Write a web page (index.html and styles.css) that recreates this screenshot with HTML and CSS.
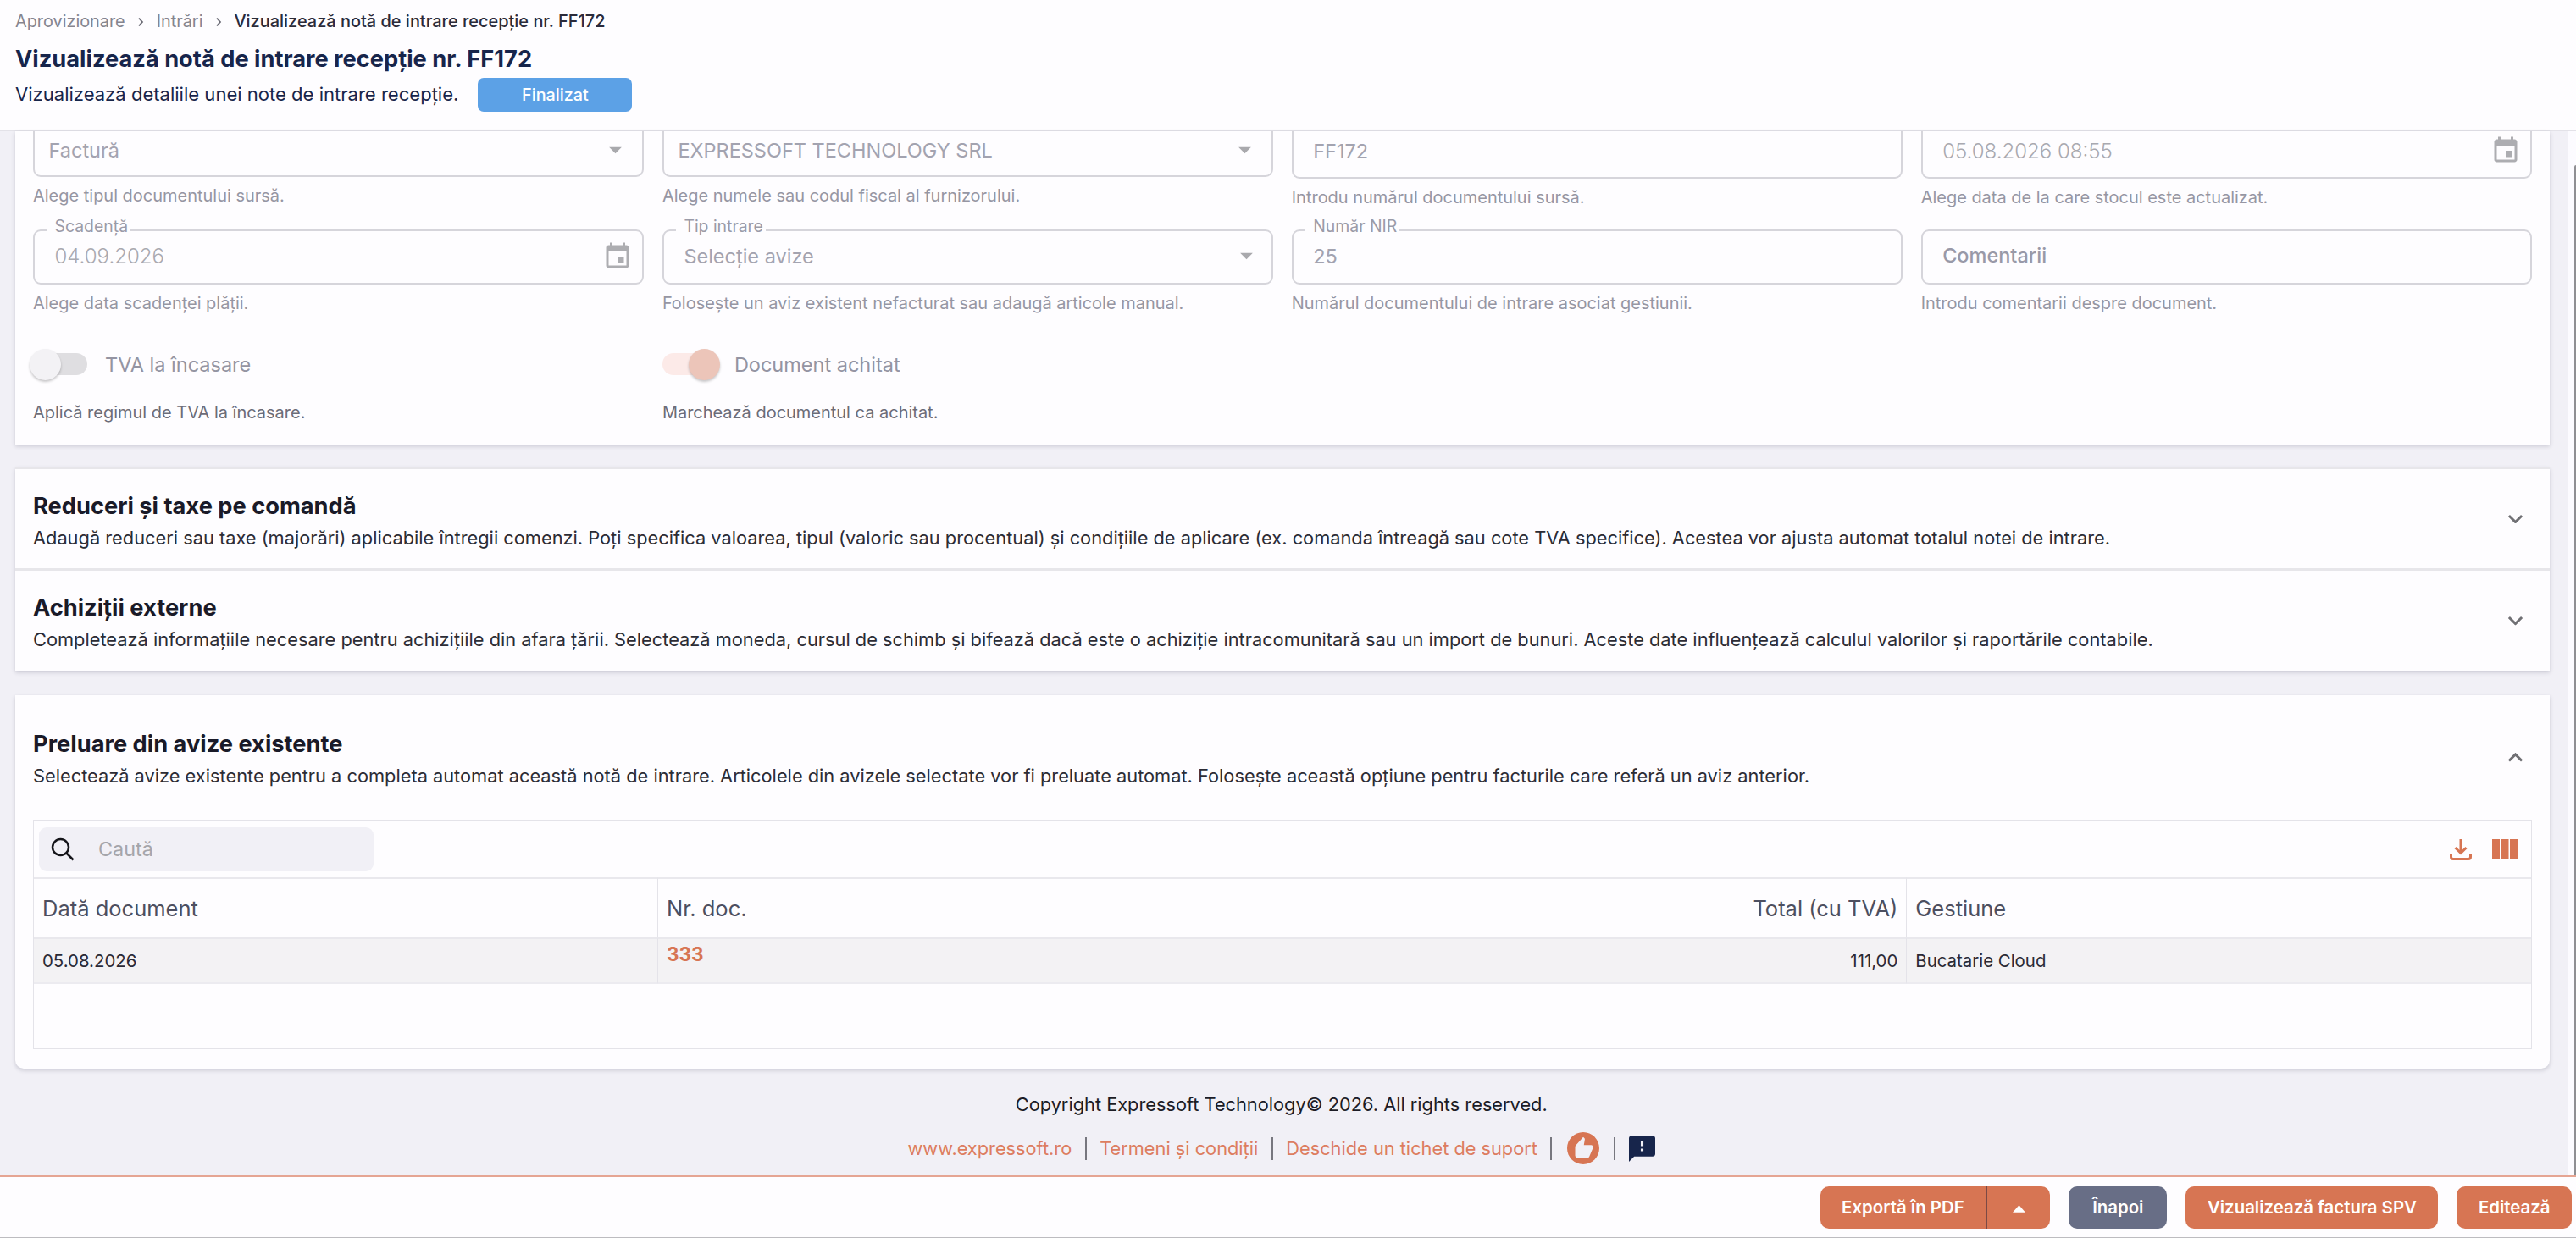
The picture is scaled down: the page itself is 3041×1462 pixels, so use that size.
FILE: index.html
```html
<!DOCTYPE html>
<html lang="ro">
<head>
    <meta charset="UTF-8">
    <meta name="viewport" content="width=device-width, initial-scale=1.0">
    <title>Vizualizează notă de intrare recepție nr. FF172</title>
    <link rel="stylesheet" href="styles.css">
</head>
<body>
<!-- Shared icons -->
<svg class="icon-defs" xmlns="http://www.w3.org/2000/svg">
    <symbol id="icon-calendar" viewBox="0 0 24 24">
        <path d="M17 12h-5v5h5v-5zM16 1v2H8V1H6v2H5c-1.11 0-1.99.9-1.99 2L3 19c0 1.1.89 2 2 2h14c1.1 0 2-.9 2-2V5c0-1.1-.9-2-2-2h-1V1h-2zm3 18H5V8h14v11z"/>
    </symbol>
    <symbol id="icon-arrow" viewBox="0 0 24 24">
        <path d="M7.2 9.5h9.6L12 14.5z"/>
    </symbol>
    <symbol id="icon-chevron" viewBox="0 0 20 12">
        <path d="M2 2l8 8 8-8" fill="none" stroke="currentColor" stroke-width="3.2"/>
    </symbol>
</svg>

<header class="page-header">
    <nav class="breadcrumbs">
        <a>Aprovizionare</a>
        <svg class="crumb-sep" viewBox="0 0 8 12"><path d="M2 1.5L6 6l-4 4.5"/></svg>
        <a>Intrări</a>
        <svg class="crumb-sep" viewBox="0 0 8 12"><path d="M2 1.5L6 6l-4 4.5"/></svg>
        <span class="current">Vizualizează notă de intrare recepție nr. FF172</span>
    </nav>
    <h1>Vizualizează notă de intrare recepție nr. FF172</h1>
    <div class="subtitle">
        <span>Vizualizează detaliile unei note de intrare recepție.</span>
        <span class="badge">Finalizat</span>
    </div>
</header>

<div class="scroll-area">
    <main class="content">
        <!-- Document details -->
        <section class="card details">
            <div class="form-group">
                <div class="field cut select">
                    <span class="value">Factură</span>
                    <svg class="arrow"><use href="#icon-arrow"/></svg>
                </div>
                <p class="helper">Alege tipul documentului sursă.</p>
            </div>
            <div class="form-group">
                <div class="field cut select">
                    <span class="value">EXPRESSOFT TECHNOLOGY SRL</span>
                    <svg class="arrow"><use href="#icon-arrow"/></svg>
                </div>
                <p class="helper">Alege numele sau codul fiscal al furnizorului.</p>
            </div>
            <div class="form-group">
                <div class="field cut">
                    <span class="value">FF172</span>
                </div>
                <p class="helper">Introdu numărul documentului sursă.</p>
            </div>
            <div class="form-group">
                <div class="field cut">
                    <span class="value date">05.08.2026 08:55</span>
                    <svg class="calendar"><use href="#icon-calendar"/></svg>
                </div>
                <p class="helper">Alege data de la care stocul este actualizat.</p>
            </div>

            <div class="form-group">
                <div class="field">
                    <label>Scadență</label>
                    <span class="value date">04.09.2026</span>
                    <svg class="calendar"><use href="#icon-calendar"/></svg>
                </div>
                <p class="helper">Alege data scadenței plății.</p>
            </div>
            <div class="form-group">
                <div class="field">
                    <label>Tip intrare</label>
                    <span class="value">Selecție avize</span>
                    <svg class="arrow"><use href="#icon-arrow"/></svg>
                </div>
                <p class="helper">Folosește un aviz existent nefacturat sau adaugă articole manual.</p>
            </div>
            <div class="form-group">
                <div class="field">
                    <label>Număr NIR</label>
                    <span class="value">25</span>
                </div>
                <p class="helper">Numărul documentului de intrare asociat gestiunii.</p>
            </div>
            <div class="form-group">
                <div class="field">
                    <span class="value placeholder">Comentarii</span>
                </div>
                <p class="helper">Introdu comentarii despre document.</p>
            </div>

            <div class="form-group">
                <div class="switch-row">
                    <span class="switch"><span class="thumb"></span></span>
                    <span>TVA la încasare</span>
                </div>
                <p class="helper dark">Aplică regimul de TVA la încasare.</p>
            </div>
            <div class="form-group">
                <div class="switch-row">
                    <span class="switch on"><span class="thumb"></span></span>
                    <span>Document achitat</span>
                </div>
                <p class="helper dark">Marchează documentul ca achitat.</p>
            </div>
        </section>

        <!-- Collapsed panels -->
        <section class="card panels">
            <div class="panel">
                <div>
                    <h2>Reduceri și taxe pe comandă</h2>
                    <p>Adaugă reduceri sau taxe (majorări) aplicabile întregii comenzi. Poți specifica valoarea, tipul (valoric sau procentual) și condițiile de aplicare (ex. comanda întreagă sau cote TVA specifice). Acestea vor ajusta automat totalul notei de intrare.</p>
                </div>
                <svg class="chevron"><use href="#icon-chevron"/></svg>
            </div>
            <div class="panel">
                <div>
                    <h2>Achiziții externe</h2>
                    <p>Completează informațiile necesare pentru achizițiile din afara țării. Selectează moneda, cursul de schimb și bifează dacă este o achiziție intracomunitară sau un import de bunuri. Aceste date influențează calculul valorilor și raportările contabile.</p>
                </div>
                <svg class="chevron"><use href="#icon-chevron"/></svg>
            </div>
        </section>

        <!-- Delivery notes -->
        <section class="card notes">
            <div class="panel">
                <div>
                    <h2>Preluare din avize existente</h2>
                    <p>Selectează avize existente pentru a completa automat această notă de intrare. Articolele din avizele selectate vor fi preluate automat. Folosește această opțiune pentru facturile care referă un aviz anterior.</p>
                </div>
                <svg class="chevron up"><use href="#icon-chevron"/></svg>
            </div>
            <div class="grid">
                <div class="toolbar">
                    <div class="search">
                        <svg viewBox="0 0 28 28"><circle cx="11.5" cy="11.5" r="9.5"/><path d="M18.5 18.5L26.5 26.5"/></svg>
                        <span>Caută</span>
                    </div>
                    <div class="tools">
                        <svg class="download" viewBox="0 0 26 26"><path d="M13 1v16M6.5 11l6.5 6.5 6.5-6.5M1.5 18v4q0 2.5 2.5 2.5h18q2.5 0 2.5-2.5v-4"/></svg>
                        <svg class="columns" viewBox="0 0 30 23"><path d="M0 0h9v23H0zM10.5 0h9v23h-9zM21 0h9v23h-9z"/></svg>
                    </div>
                </div>
                <table>
                    <thead>
                        <tr>
                            <th>Dată document</th>
                            <th>Nr. doc.</th>
                            <th class="right">Total (cu TVA)</th>
                            <th>Gestiune</th>
                        </tr>
                    </thead>
                    <tbody>
                        <tr>
                            <td>05.08.2026</td>
                            <td class="doc"><a>333</a></td>
                            <td class="right">111,00</td>
                            <td>Bucatarie Cloud</td>
                        </tr>
                    </tbody>
                </table>
            </div>
        </section>

        <footer class="copyright">
            <p>Copyright Expressoft Technology© 2026. All rights reserved.</p>
            <div class="links">
                <a>www.expressoft.ro</a>
                <i></i>
                <a>Termeni și condiții</a>
                <i></i>
                <a>Deschide un tichet de suport</a>
                <i></i>
                <svg class="like" viewBox="2 2 20 20"><path d="M12 2C6.48 2 2 6.48 2 12s4.48 10 10 10 10-4.48 10-10S17.52 2 12 2zm6 9.8c0 .12-.02.24-.07.35l-2.12 4.96c-.23.54-.76.89-1.34.89H8.5C7.67 18 7 17.33 7 16.5v-5.25c0-.39.16-.77.43-1.05L12 5l.69.69c.18.19.29.44.29.7v.2L12.41 10H17c.55 0 1 .45 1 1v.8z"/></svg>
                <i></i>
                <svg class="feedback" viewBox="2 2 20 20"><path d="M20 2H4c-1.1 0-1.99.9-1.99 2L2 22l4-4h14c1.1 0 2-.9 2-2V4c0-1.1-.9-2-2-2zm-7 12h-2v-2h2v2zm0-4h-2V6h2v4z"/></svg>
            </div>
        </footer>
    </main>
    <div class="scrollbar"><div class="scroll-thumb"></div></div>
</div>

<div class="actions">
    <div class="split">
        <button>Exportă în PDF</button>
        <button class="toggle"><svg viewBox="0 0 16 9"><path d="M8 0l8 9H0z"/></svg></button>
    </div>
    <button class="secondary">Înapoi</button>
    <button>Vizualizează factura SPV</button>
    <button>Editează</button>
</div>
</body>
</html>
```
FILE: styles.css
```css
* {
    box-sizing: border-box;
}
body {
    margin: 0;
    height: 1462px;
    display: flex;
    flex-direction: column;
    overflow: hidden;
    background-color: #f1f0f6;
    font-family: Inter, "Liberation Sans", sans-serif;
    font-size: 21.8px;
    color: #1c1c26;
}
h1, h2, p {
    margin: 0;
}
svg {
    flex: none;
    fill: currentColor;
}
.icon-defs {
    position: absolute;
    width: 0;
    height: 0;
}

/* Header */
.page-header {
    flex: none;
    height: 155px;
    padding: 11px 18px 0;
    background-color: #fefdff;
    border-bottom: 1px solid #e3e2e8;
}
.breadcrumbs {
    display: flex;
    align-items: center;
    height: 28px;
    font-size: 19.85px;
    color: #85858f;
}
.crumb-sep {
    width: 8px;
    height: 12px;
    margin: 2px 14.5px 0;
}
.crumb-sep path {
    fill: none;
    stroke: #6b6b75;
    stroke-width: 1.8;
}
.breadcrumbs .current {
    font-size: 19.95px;
    font-weight: 500;
    color: #2b2b3a;
}
h1 {
    margin-top: 13px;
    font-size: 27.25px;
    font-weight: 700;
    line-height: 36px;
    color: #17254b;
}
.subtitle {
    display: flex;
    align-items: center;
    gap: 23px;
    height: 40px;
    margin-top: 4px;
    font-size: 22.05px;
    color: #17254b;
}
.subtitle span:first-child {
    padding-bottom: 2px;
}
.badge {
    width: 182px;
    height: 40px;
    line-height: 40px;
    border-radius: 7px;
    background-color: #5ca1e6;
    color: #fff;
    font-size: 19.8px;
    font-weight: 500;
    text-align: center;
}

/* Scrolling page */
.scroll-area {
    flex: 1;
    display: flex;
    min-height: 0;
}
.content {
    flex: 1;
    min-width: 0;
    padding: 0 22px 0 17.5px;
}
.scrollbar {
    width: 9px;
    background-color: #fcfbff;
    padding: 40px 0 0 7px;
}
.scroll-thumb {
    height: 100%;
    background-color: #8f8f93;
    border-top-left-radius: 2px;
}
.card {
    background-color: #fefdff;
    box-shadow: 0 2px 5px rgba(40, 40, 70, 0.2);
}

/* Form */
.details {
    display: grid;
    grid-template-columns: repeat(4, 1fr);
    grid-template-rows: 116px 130px 124px;
    column-gap: 22px;
    padding: 0 21.5px;
}
.field {
    position: relative;
    display: flex;
    align-items: center;
    justify-content: space-between;
    height: 65px;
    padding: 0 11px 2px 23.5px;
    border: 2px solid #d6d5db;
    border-radius: 9px;
}
.field.cut {
    height: 56px;
    padding: 0 11px 8px 23.5px;
    border-top: 0;
    border-radius: 0 0 9px 9px;
}
.field.cut.select {
    height: 54px;
    padding: 0 13px 8px 16.5px;
}
.field label {
    position: absolute;
    top: -19px;
    left: 14px;
    padding: 0 3px 0 9.5px;
    line-height: 26px;
    background-color: #fefdff;
    font-size: 19.4px;
    color: #9b9ba8;
}
.value {
    font-size: 23.5px;
    color: #a3a3b0;
}
.value.date {
    font-size: 24px;
    font-weight: 300;
    color: #a9a9b0;
}
.value.placeholder {
    font-weight: 500;
    color: #9999a8;
    padding-bottom: 2px;
}
.arrow {
    width: 37px;
    height: 37px;
    color: #a9a9ad;
}
.calendar {
    width: 36px;
    height: 36px;
    color: #adadb1;
}
.helper {
    margin-top: 8.5px;
    line-height: 26px;
    font-size: 19.98px;
    color: #9696a3;
}
.helper.dark {
    margin-top: 24px;
    color: #6c6c78;
}
.switch-row {
    display: flex;
    align-items: center;
    gap: 21px;
    height: 40px;
    margin-top: 9px;
    font-size: 23.5px;
    color: #9494a2;
}
.switch {
    position: relative;
    width: 64px;
    height: 26px;
    border-radius: 13px;
    background-color: #dfdee1;
}
.thumb {
    position: absolute;
    top: -5px;
    left: -4px;
    width: 37px;
    height: 37px;
    border-radius: 50%;
    background-color: #f3f2f5;
    box-shadow: 0 2px 3px rgba(0, 0, 0, 0.22);
}
.switch.on {
    background-color: #fceae8;
}
.switch.on .thumb {
    left: 31px;
    background-color: #ecc5b9;
}

/* Panels */
.panels {
    margin-top: 27px;
    border-top: 2px solid #e7e6ea;
}
.panel {
    display: flex;
    align-items: center;
    justify-content: space-between;
    height: 117px;
    padding: 0 31.5px 0 21.5px;
}
.panel + .panel {
    height: 121px;
    border-top: 3px solid #e7e6ea;
}
h2 {
    font-size: 27.25px;
    font-weight: 700;
    line-height: 38px;
    margin-top: 6px;
    color: #1a1a28;
}
.panel p {
    font-size: 21.81px;
    line-height: 36px;
    white-space: nowrap;
    color: #2c2c35;
}
.chevron {
    width: 19px;
    height: 11.5px;
    color: #707074;
}
.chevron.up {
    transform: rotate(180deg);
}
.notes {
    height: 441px;
    margin-top: 29px;
    border-radius: 0 0 10px 10px;
}
.notes .panel {
    height: 147px;
}
.notes h2 {
    margin-top: 5px;
}

/* Grid */
.grid {
    height: 271px;
    margin: 0 21.5px;
    border: 1px solid #e4e3e9;
}
.toolbar {
    display: flex;
    align-items: center;
    justify-content: space-between;
    height: 67px;
    padding: 0 16px 0 6px;
}
.search {
    display: flex;
    align-items: center;
    width: 395px;
    height: 52px;
    padding-left: 14px;
    border-radius: 9px;
    background-color: #f1f0f6;
    font-size: 23.4px;
    color: #a5a5aa;
}
.search svg {
    width: 28px;
    height: 28px;
    margin-right: 28px;
    fill: none;
    stroke: #15151a;
    stroke-width: 2.5;
}
.tools {
    display: flex;
    align-items: center;
    gap: 24px;
    color: #d77553;
}
.download {
    width: 26px;
    height: 26px;
    fill: none;
    stroke: currentColor;
    stroke-width: 3;
}
.columns {
    width: 30px;
    height: 23px;
}
table {
    width: 100%;
    table-layout: fixed;
    border-collapse: separate;
    border-spacing: 0;
}
th, td {
    padding: 0 10px;
    border-top: 2px solid #e9e8ed;
    border-left: 1px solid #e4e3e9;
    text-align: left;
}
th {
    height: 71px;
    font-size: 25.5px;
    font-weight: 400;
    color: #4d4f60;
}
td {
    height: 55px;
    font-size: 20.4px;
    background-color: #f3f2f4;
    border-bottom: 2px solid #ecebf0;
    color: #2a2a36;
}
th:first-child, td:first-child {
    width: 736px;
    border-left: 0;
}
.right {
    text-align: right;
}
.doc {
    font-size: 22.5px;
    font-weight: 700;
    color: #d77553;
    padding-bottom: 16px;
}

/* Copyright */
.copyright {
    padding: 28px 2px 0 0;
    text-align: center;
    font-size: 21.77px;
}
.copyright p {
    line-height: 28px;
}
.links {
    display: flex;
    align-items: center;
    justify-content: center;
    height: 40px;
    margin-top: 18px;
    color: #dd7d5f;
}
.links i {
    width: 2px;
    height: 27px;
    margin: 0 15.5px;
    background-color: #77777f;
}
.like {
    width: 38px;
    height: 38px;
    margin: 0 2px;
    color: #d77553;
}
.feedback {
    width: 31px;
    height: 31px;
    color: #17254b;
}

/* Bottom bar */
.actions {
    flex: none;
    display: flex;
    align-items: center;
    justify-content: flex-end;
    gap: 22px;
    height: 74px;
    padding: 0 5px 0 0;
    background-color: #fefdff;
    border-top: 2px solid #e5a593;
    border-bottom: 1px solid #bdbcc0;
}
button {
    height: 50px;
    padding: 0 25.5px;
    border: none;
    border-radius: 10px;
    background-color: #d77553;
    color: #fff;
    font-family: inherit;
    font-size: 20.4px;
    font-weight: 600;
}
button.secondary {
    padding: 0 28px;
    background-color: #686e86;
}
.split {
    display: flex;
}
.split button:first-child {
    padding-right: 26.5px;
    border-radius: 10px 0 0 10px;
}
.split .toggle {
    width: 75px;
    padding: 0;
    border-left: 1px solid #7b4a45;
    border-radius: 0 10px 10px 0;
}
.toggle svg {
    width: 15px;
    height: 9px;
    vertical-align: middle;
}
```
